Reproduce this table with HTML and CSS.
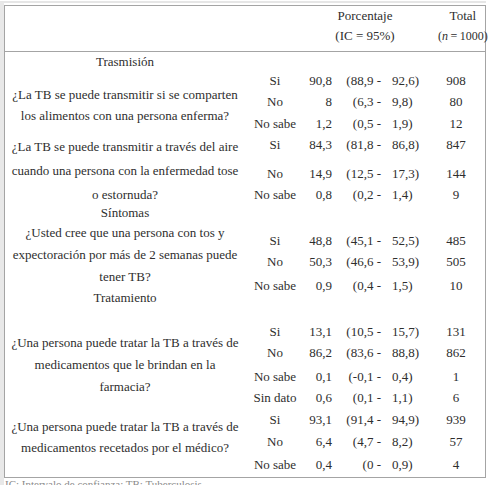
FILE: index.html
```html
<!DOCTYPE html>
<html lang="es">
<head>
    <meta charset="UTF-8">
    <meta name="viewport" content="width=device-width, initial-scale=1.0">
    <title>Conocimientos sobre TB</title>
    <link rel="stylesheet" href="styles.css">
</head>
<body>
    <div class="frame">
        <div class="tabla">
            <div class="head">
                <div></div>
                <div class="head-pct">Porcentaje<br>(IC = 95%)</div>
                <div class="head-total"><span>Total</span><span class="n">(<i>n</i> = 1000)</span></div>
            </div>

            <div class="cuerpo">
                <!-- columna de preguntas -->
                <div class="preguntas">
                    <div class="label l1">Trasmisión</div>
                    <div class="q q1">¿La TB se puede transmitir si se comparten<br>los alimentos con una persona enferma?</div>
                    <div class="q q2">¿La TB se puede transmitir a través del aire<br>cuando una persona con la enfermedad tose<br>o estornuda?</div>
                    <div class="label l2">Síntomas</div>
                    <div class="q q3">¿Usted cree que una persona con tos y<br>expectoración por más de 2 semanas puede<br>tener TB?</div>
                    <div class="label l3">Tratamiento</div>
                    <div class="q q4">¿Una persona puede tratar la TB a través de<br>medicamentos que le brindan en la<br>farmacia?</div>
                    <div class="q q5">¿Una persona puede tratar la TB a través de<br>medicamentos recetados por el médico?</div>
                </div>

                <!-- columna de datos -->
                <div class="datos">
                    <div class="fila f1"><span>Si</span><span>90,8</span><span>(88,9 -</span><span>92,6)</span><span>908</span></div>
                    <div class="fila"><span>No</span><span>8</span><span>(6,3 -</span><span>9,8)</span><span>80</span></div>
                    <div class="fila f3"><span>No sabe</span><span>1,2</span><span>(0,5 -</span><span>1,9)</span><span>12</span></div>
                    <div class="fila"><span>Si</span><span>84,3</span><span>(81,8 -</span><span>86,8)</span><span>847</span></div>
                    <div class="fila f5"><span>No</span><span>14,9</span><span>(12,5 -</span><span>17,3)</span><span>144</span></div>
                    <div class="fila"><span>No sabe</span><span>0,8</span><span>(0,2 -</span><span>1,4)</span><span>9</span></div>

                    <div class="fila f7"><span>Si</span><span>48,8</span><span>(45,1 -</span><span>52,5)</span><span>485</span></div>
                    <div class="fila"><span>No</span><span>50,3</span><span>(46,6 -</span><span>53,9)</span><span>505</span></div>
                    <div class="fila f9"><span>No sabe</span><span>0,9</span><span>(0,4 -</span><span>1,5)</span><span>10</span></div>

                    <div class="fila f10"><span>Si</span><span>13,1</span><span>(10,5 -</span><span>15,7)</span><span>131</span></div>
                    <div class="fila"><span>No</span><span>86,2</span><span>(83,6 -</span><span>88,8)</span><span>862</span></div>
                    <div class="fila f12"><span>No sabe</span><span>0,1</span><span>(-0,1 -</span><span>0,4)</span><span>1</span></div>
                    <div class="fila"><span>Sin dato</span><span>0,6</span><span>(0,1 -</span><span>1,1)</span><span>6</span></div>
                    <div class="fila f14"><span>Si</span><span>93,1</span><span>(91,4 -</span><span>94,9)</span><span>939</span></div>
                    <div class="fila f15"><span>No</span><span>6,4</span><span>(4,7 -</span><span>8,2)</span><span>57</span></div>
                    <div class="fila f16"><span>No sabe</span><span>0,4</span><span>(0 -</span><span>0,9)</span><span>4</span></div>
                </div>
            </div>
        </div>
        <div class="nota">IC: Intervalo de confianza; TB: Tuberculosis.</div>
    </div>
</body>
</html>
```

FILE: styles.css
```css
body {
    margin: 0;
    background: #fff;
    font-family: "Liberation Serif", "Times New Roman", serif;
    font-size: 13px;
    color: #2e2e2e;
}

.frame {
    margin-top: 1px;
    padding-top: 2px;
    border-top: 2px solid #e6e6e6;
    border-left: 4px solid #e8e8e8;
    width: 482px;
}

.tabla {
    border: 1px solid #a4a4a4;
    height: 473px;
    box-sizing: border-box;
}

/* cabecera */
.head {
    display: grid;
    grid-template-columns: 297px 126px 1fr;
    line-height: 20px;
    padding-bottom: 5px;
    border-bottom: 1px solid #a4a4a4;
}

.head-pct {
    text-align: center;
}

.head-total {
    display: flex;
    flex-direction: column;
    align-items: center;
    padding-left: 10px;
    white-space: nowrap;
}

.head-total .n {
    font-size: 12px;
    word-spacing: -0.5px;
}

.cuerpo {
    display: flex;
}

/* preguntas */
.preguntas {
    width: 240px;
    text-align: center;
    white-space: nowrap;
}

.l1 { line-height: 20px; }
.l2 { line-height: 12px; }
.l3 { line-height: 20px; }

.q1 { line-height: 21px; margin-top: 12px; }
.q2 { line-height: 24px; margin-top: 9px; }
.q3 { line-height: 22px; margin-top: 3px; }
.q4 { line-height: 22px; margin-top: 24px; }
.q5 { line-height: 21px; margin-top: 18px; }

/* datos */
.datos {
    padding-left: 3px;
}

.fila {
    display: grid;
    grid-template-columns: 54px 30px 49px 47px 56px;
    line-height: 21px;
    white-space: nowrap;
}

.fila span:nth-child(1) { text-align: center; }
.fila span:nth-child(2) { text-align: right; }
.fila span:nth-child(3) { text-align: right; }
.fila span:nth-child(4) { padding-left: 11px; }
.fila span:nth-child(5) { text-align: center; }

.f1  { margin-top: 18px; }
.f3  { margin-top: 1px; }
.f5  { margin-top: 8px; }
.f7  { margin-top: 25px; }
.f9  { margin-top: 3px; }
.f10 { margin-top: 25px; }
.f12 { margin-top: 3px; }
.f14 { margin-top: 1px; }
.f15 { margin-top: 1px; }
.f16 { margin-top: 2px; }

.nota {
    font-size: 11px;
    line-height: 12px;
    color: #8a8a8a;
    padding-left: 1px;
}
```
